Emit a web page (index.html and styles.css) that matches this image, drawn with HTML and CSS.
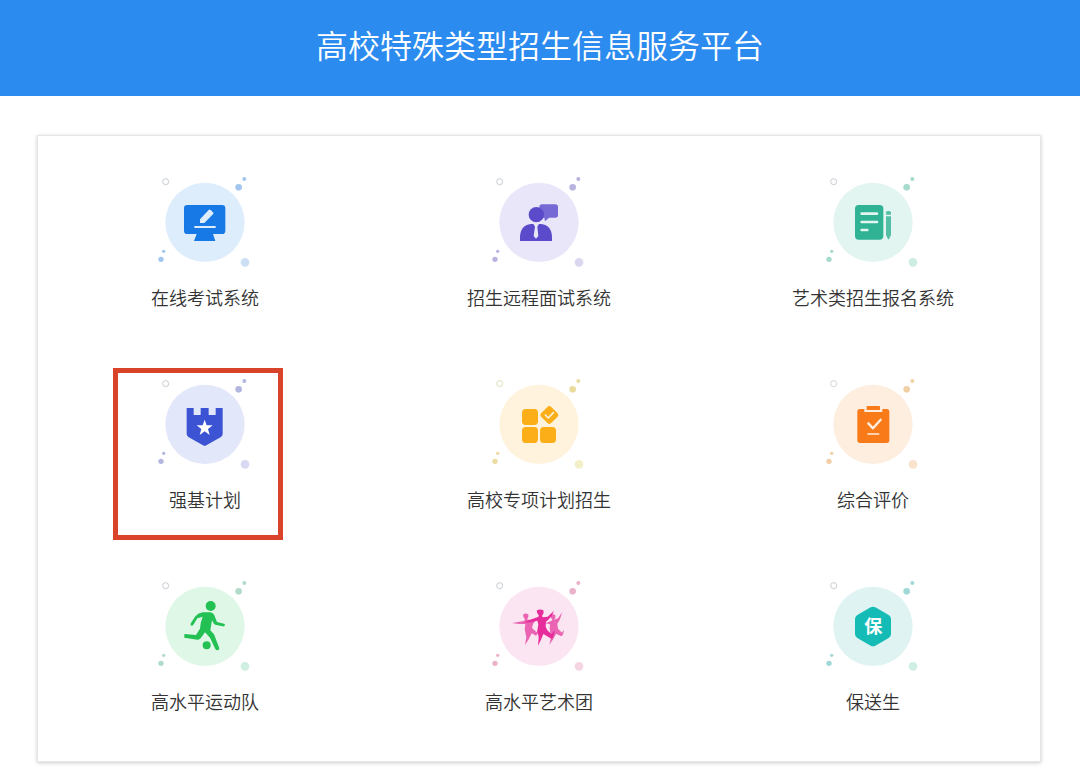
FILE: index.html
```html
<!DOCTYPE html>
<html lang="zh-CN">
<head>
<meta charset="utf-8">
<meta name="viewport" content="width=device-width, initial-scale=1">
<title>高校特殊类型招生信息服务平台</title>
<link rel="stylesheet" href="styles.css">
</head>
<body>
<svg class="defs" aria-hidden="true">
  <symbol id="halo" viewBox="0 0 330 315">
    <circle class="disc" cx="165" cy="157" r="119"/>
    <circle class="ring" cx="47" cy="35" r="9"/>
    <circle class="dot" cx="266" cy="52" r="10"/>
    <circle class="dot" cx="283" cy="27" r="6"/>
    <circle class="dot" cx="33" cy="268" r="8"/>
    <circle class="dot" cx="41" cy="244" r="5"/>
    <circle class="bubble" cx="285" cy="277" r="13"/>
  </symbol>
</svg>
<header class="banner"><h1 class="title">高校特殊类型招生信息服务平台</h1></header>
<main class="panel">
  <a class="entry exam" href="#exam">
    <svg class="icon" viewBox="0 0 330 315" aria-hidden="true">
      <use href="#halo"/>
      <path class="main" d="M112 105H216Q226 105 226 115V182Q226 192 216 192H189L196 213H132L140 192H112Q102 192 102 182V115Q102 105 112 105Z"/>
      <path class="cut" d="M150 148L176 120Q179 117 182 120L189 127Q192 130 189 133L163 159H150ZM133 168H197V174H133Z"/>
    </svg>
    <span class="label">在线考试系统</span>
  </a>
  <a class="entry interview" href="#interview">
    <svg class="icon" viewBox="0 0 330 315" aria-hidden="true">
      <use href="#halo"/>
      <path class="soft" d="M174 103H214Q222 103 222 111V135Q222 143 214 143H195L183 154L181 143H166V111Q166 103 174 103Z"/>
      <circle class="main" cx="157" cy="134" r="23"/>
      <path class="main" d="M108 213V203Q108 166 141 162H171Q204 166 204 203V213Z"/>
      <path class="cut" d="M146 158H167L160 170L163 198L156 206L149 198L153 170Z"/>
    </svg>
    <span class="label">招生远程面试系统</span>
  </a>
  <a class="entry art" href="#art">
    <svg class="icon" viewBox="0 0 330 315" aria-hidden="true">
      <use href="#halo"/>
      <rect class="main" x="111" y="105" width="85" height="104" rx="11"/>
      <path class="stroke-cut" stroke-width="8" d="M131 131H177M131 156H177M131 180H148"/>
      <path class="soft" d="M204 127Q205 123 211 123Q218 123 219 127V134H204ZM204 139H219V195L213 208H210L204 195Z"/>
    </svg>
    <span class="label">艺术类招生报名系统</span>
  </a>
  <a class="entry basis marked" href="#basis">
    <svg class="icon" viewBox="0 0 330 315" aria-hidden="true">
      <use href="#halo"/>
      <path class="main" d="M110 108H131V129H152V108H176V129H197V108H218V186Q218 191 213 195L169 220Q164 223 159 220L115 195Q110 191 110 186Z"/>
      <path class="star" d="M164 143L170 160L188 160L174 171L179 189L164 178L149 189L154 171L140 160L158 160Z"/>
    </svg>
    <span class="label">强基计划</span>
  </a>
  <a class="entry special" href="#special">
    <svg class="icon" viewBox="0 0 330 315" aria-hidden="true">
      <use href="#halo"/>
      <rect class="main" x="114" y="111" width="48" height="48" rx="11"/>
      <rect class="main" x="114" y="165" width="48" height="48" rx="11"/>
      <rect class="main" x="168" y="165" width="48" height="48" rx="11"/>
      <rect class="main" x="175" y="108" width="42" height="42" rx="7" transform="rotate(45 196 129)"/>
      <path class="stroke-cut" stroke-width="5" d="M184 129L193 138L208 122"/>
    </svg>
    <span class="label">高校专项计划招生</span>
  </a>
  <a class="entry review" href="#review">
    <svg class="icon" viewBox="0 0 330 315" aria-hidden="true">
      <use href="#halo"/>
      <path class="main" d="M126 111H139V120H193V111H206Q214 111 214 119V205Q214 213 206 213H126Q118 213 118 205V119Q118 111 126 111Z"/>
      <rect class="main" x="146" y="102" width="40" height="12" rx="2"/>
      <path class="stroke-cut" stroke-width="7" d="M151 154L165 169L188 143"/>
      <path class="stroke-cut" stroke-width="5" d="M150 186H182"/>
    </svg>
    <span class="label">综合评价</span>
  </a>
  <a class="entry sport" href="#sport">
    <svg class="icon" viewBox="0 0 330 315" aria-hidden="true">
      <use href="#halo"/>
      <circle class="main" cx="182" cy="96" r="15"/>
      <circle class="main" cx="170" cy="214" r="12"/>
      <path class="main" d="M159 115H181Q190 116 193 124L201 144L222 149Q226 151 225 154Q223 158 218 157L196 152Q192 151 190 146L186 139L181 169L192 181L208 223Q208 229 203 229Q198 229 196 225L180 191L165 175L152 193Q148 198 142 197L103 191V180L138 183L150 164Q151 146 158 128L142 133L129 154Q125 157 122 153Q121 150 123 147L136 127Q145 117 159 115Z"/>
    </svg>
    <span class="label">高水平运动队</span>
  </a>
  <a class="entry troupe" href="#troupe">
    <svg class="icon" viewBox="0 0 330 315" aria-hidden="true">
      <use href="#halo"/>
      <g class="soft">
        <path d="M117 122Q124 116 133 121Q135 131 129 136L145 140L162 130L147 150L144 162L158 175L163 166Q164 180 156 185L143 178L135 194L123 213L127 190L122 165L124 150L104 150L84 147L120 141L123 136Q117 130 117 122Z"/>
        <path d="M199 124Q206 118 214 123Q216 132 210 137L222 133L235 114L227 138L220 149L222 164L234 176L239 167Q240 181 232 187L216 179L208 195L196 212L201 191L197 164L198 151L184 148L203 140L205 136Q199 132 199 124Z"/>
      </g>
      <path class="main" d="M158 110Q167 104 178 109Q181 119 174 125L176 130L191 128L210 110Q206 125 193 137L186 143L185 158L190 169L203 181L211 168Q212 187 203 195L187 185L178 180L171 197L162 215L164 190L160 170L163 151L160 140L140 145L120 146L136 138L162 129L165 125Q158 118 158 110Z"/>
    </svg>
    <span class="label">高水平艺术团</span>
  </a>
  <a class="entry recommend" href="#recommend">
    <svg class="icon" viewBox="0 0 330 315" aria-hidden="true">
      <use href="#halo"/>
      <path class="main" d="M158 100Q165 96 172 100L212 123Q219 127 219 135V180Q219 188 212 192L172 215Q165 219 158 215L118 192Q111 188 111 180V135Q111 127 118 123Z"/>
      <text class="mark" x="166" y="178" text-anchor="middle">保</text>
    </svg>
    <span class="label">保送生</span>
  </a>
</main>
</body>
</html>
```
FILE: styles.css
```css
*,
*::after {
  box-sizing: border-box;
}

body {
  margin: 0;
  background: #fff;
  color: #333;
  font-family: "Noto Sans CJK SC", sans-serif;
}

.defs {
  position: absolute;
  width: 0;
  height: 0;
}

.banner {
  padding: 20px 16px 28px;
  background: #2c8bef;
  text-align: center;
}

.title {
  margin: 0;
  color: #fff;
  font-size: 32px;
  font-weight: 350;
  line-height: 48px;
}

.panel {
  display: grid;
  grid-template-columns: repeat(3, 1fr);
  row-gap: 63px;
  margin: 39px 39px 12px 37px;
  padding: 34px 0 48px;
  border: 1px solid #e6e6e6;
  box-shadow: 0 1px 4px rgba(0, 0, 0, 0.2);
}

.entry {
  position: relative;
  display: flex;
  flex-direction: column;
  align-items: center;
  gap: 10px;
  color: #333;
  text-decoration: none;
}

.marked::after {
  content: "";
  position: absolute;
  top: -4px;
  left: calc(50% - 92px);
  width: 170px;
  height: 172px;
  border: 5px solid #d8432a;
}

.icon {
  display: block;
  width: 110px;
  height: 105px;
}

.label {
  font-size: 18px;
  font-weight: 350;
  line-height: 24px;
}

.disc { fill: var(--disc); }
.dot { fill: var(--dot); }
.bubble { fill: var(--bubble); }
.ring { fill: none; stroke: var(--ring, #c6ccd2); stroke-width: 3; }
.main { fill: var(--main); }
.soft { fill: var(--soft); }
.cut { fill: var(--disc); }
.star { fill: #fff; }
.stroke-cut { fill: none; stroke: var(--disc); stroke-linecap: round; stroke-linejoin: round; }
.mark { fill: #fff; font-size: 54px; font-weight: 700; }

.exam { --disc: #deedfc; --main: #1679e5; --dot: #a3c6ee; --bubble: #cddff5; }
.interview { --disc: #e9e6fa; --main: #5b4bcb; --soft: #7668d5; --dot: #b9b4df; --bubble: #dbd7f0; }
.art { --disc: #e3f5f1; --main: #30b394; --soft: #55bfa6; --dot: #a5dacd; --bubble: #cdece3; }
.basis { --disc: #e3e7fa; --main: #3c54d3; --dot: #b3b7df; --bubble: #d9daf1; }
.special { --disc: #fff3dd; --main: #fbae17; --dot: #eadb9e; --bubble: #f3f0c9; --ring: #e0e0ba; }
.review { --disc: #feeee0; --main: #f87a18; --dot: #f2cfa5; --bubble: #fae3cb; --ring: #d8d4cd; }
.sport { --disc: #dff7e6; --main: #23c054; --dot: #b1dcc9; --bubble: #d1eee2; }
.troupe { --disc: #fce5f2; --main: #e72d9b; --soft: #ea64b3; --dot: #eab1cb; --bubble: #f6d5e3; }
.recommend { --disc: #e0f3f3; --main: #15bbb5; --dot: #a1d8d8; --bubble: #cfeee5; }
```
